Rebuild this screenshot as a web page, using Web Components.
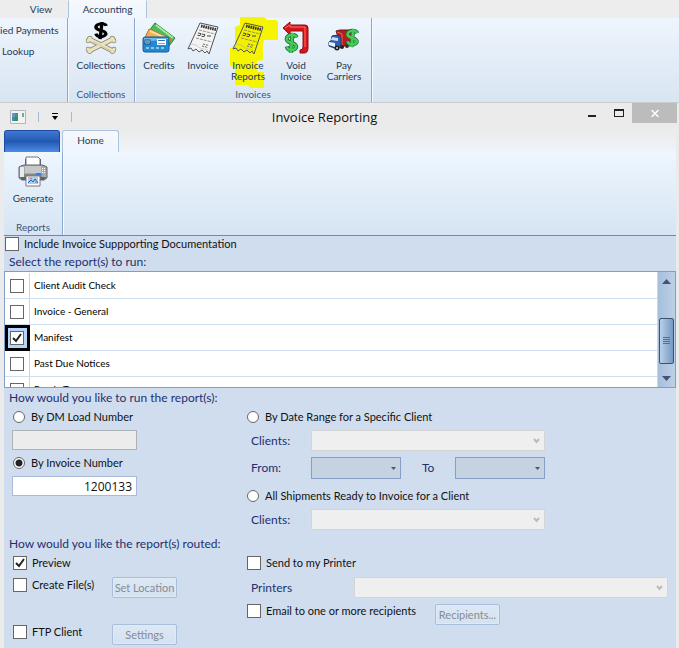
<!DOCTYPE html>
<html lang="en">
<head>
<meta charset="utf-8">
<title>Invoice Reporting</title>
<style>
  html, body { height: 100%; }
  body { margin: 0; background: #ebebeb; color: #111; font: 11px/16px Lato, "Open Sans", sans-serif; overflow: hidden; }
</style>
</head>
<body>
<invoice-app></invoice-app>

<script>
const define = (name, html, setup) => {
  const template = document.createElement('template');
  template.innerHTML = html;
  customElements.define(name, class extends HTMLElement {
    constructor() {
      super();
      this.attachShadow({ mode: 'open' }).append(template.content.cloneNode(true));
    }
    connectedCallback() { if (setup) setup(this, this.shadowRoot); }
  });
};

const receipt = `
  <path d="M13 1 31 5 22 32 20 29 18 31 15 28 12 30 9 27 6 29 4 26 1 27Z" fill="var(--paper,#f4f4f4)" stroke="#555"/>
  <path d="m1 25 2-3 6 1 4 3 8 2" fill="none" stroke="#aaa" opacity=".5"/>
  <path d="m14 4 15 3.500" stroke="#333" stroke-width="3" stroke-dasharray="1.600 .7"/>
  <path d="m12 8 16 4M9 16l16 4" stroke="#777" stroke-width=".8" stroke-dasharray="3 1"/>
  <path d="m11 11 3 .7-1 2-2.500-.5M15 12l3 .7-1 2-2.500-.5M20 14h4" stroke="#444" fill="none"/>
  <path d="m16 22 6 1.500M15 24l6 1.500" stroke="#666" stroke-dasharray="2 1"/>`;

const dollar = `
  <path d="M14 5Q13 2 8.500 2 3 3 3 7 4 10 9 11 14 13 13.500 16 12 19 8 19 4 19 3 15" fill="none"/>
  <path d="M9.500 0 7.500 22" fill="none"/>`;

const icons = {
  collections: `<svg width="32" height="32" viewBox="0 0 32 32">
    <g stroke="#8b8366" stroke-linecap="round" fill="none">
      <path d="M4 17 28 29M28 17 4 29" stroke-width="5"/>
      <path d="M3 19h.1M5 16h.1M29 19h.1M27 16h.1M3 27h.1M5 29.500h.1M29 27h.1M27 29.500h.1" stroke-width="4.500"/>
      <path d="M4 17 28 29M28 17 4 29" stroke="#e9e3c4" stroke-width="3.500"/>
      <path d="M3 19h.1M5 16h.1M29 19h.1M27 16h.1M3 27h.1M5 29.500h.1M29 27h.1M27 29.500h.1" stroke="#e9e3c4" stroke-width="3.200"/>
      <path d="m9 20 17 9" stroke="#cfc69d"/>
    </g>
    <g transform="translate(8 0) scale(.95 .78)" stroke="#000" stroke-width="3.500">${dollar}</g></svg>`,
  credits: `<svg width="34" height="32" viewBox="0 0 34 32">
    <path d="m13 1 20 15-9 12L4 13Z" fill="#4fb95c" stroke="#218439"/>
    <path d="m14 3 17 13" stroke="#a8e8a0" stroke-width="2"/>
    <path d="m7 7 22 10-5 12L2 18Z" fill="#f6ad4b" stroke="#ce7424"/>
    <path d="m8 9 18 8" stroke="#fbdc9a" stroke-width="2"/>
    <rect x="1" y="15" width="26" height="15" rx="2" fill="#2388cf" stroke="#145d9f"/>
    <path d="M2 20 26 17v-1H2Z" fill="#68baf0"/>
    <rect x="3" y="18" width="5" height="4" fill="#d7edf8" stroke="#174f80"/><path d="m4 19 3 2M7 19l-3 2" stroke="#174f80" stroke-width=".7"/>
    <path d="M15 17h9v6h-9z" fill="#fff"/><path d="M16 18.500h7" stroke="#3b70b0"/><path d="M16 21.500h7" stroke="#e48b35"/>
    <path d="M4 26h20" stroke="#a9ddf6" stroke-width="1.500" stroke-dasharray="3 2"/></svg>`,
  invoice: `<svg width="32" height="33" viewBox="0 0 32 33">${receipt}</svg>`,
  voided: `<svg width="28" height="34" viewBox="0 0 28 34">
    <path d="M1 7 8 1v3h15q3 0 3 3v20q0 5-4 5h-4v-3q3 0 3-3V10H8v4Z" fill="#d9141b" stroke="#8e0c12"/>
    <path d="M3 7 8 4v2h15v20" fill="none" stroke="#f9736c"/>
    <g transform="translate(2 12) scale(.9)"><g stroke="#14702d" stroke-width="4.500">${dollar}</g><g stroke="#49c95b" stroke-width="2.800">${dollar}</g></g></svg>`,
  carriers: `<svg width="34" height="32" viewBox="0 0 34 32">
    <path d="M9 9 13 8h12v13l-10 4Z" fill="#b51e20" stroke="#681719"/><path d="m10 10 5 2v13" stroke="#eb6a56" fill="none"/>
    <path d="m5 14 6-1 3 3v9l-4 2-8-3v-4l2-1Z" fill="#315eae" stroke="#1d3568"/>
    <path d="m5 15 6 1v3l-7-1Z" fill="#bfe3fa"/><path d="m2 20 6 1v4l-6-2Z" fill="#e7f0fb"/>
    <circle cx="10" cy="26" r="2.500" fill="#222"/><circle cx="10" cy="26" r="1" fill="#ccc"/>
    <circle cx="15" cy="25" r="2" fill="#222"/><circle cx="20" cy="24" r="2" fill="#333"/>
    <g transform="translate(18 7) scale(.87 .82)"><g stroke="#14702d" stroke-width="4.500">${dollar}</g><g stroke="#49c95b" stroke-width="3">${dollar}</g></g></svg>`,
  printer: `<svg width="30" height="31" viewBox="0 0 30 31">
    <path d="M7 3h16v9H7z" fill="#555"/><path d="M8 1h12l2 2v7H8z" fill="#fff" stroke="#777"/>
    <path d="m3 10 3-1h18l3 1 2 1v11l-3 2H4l-3-2V11Z" fill="#a8aaad" stroke="#606468"/>
    <path d="M7 10h16v7H7z" fill="#c5c7c9"/><path d="M2 11h4v10H2z" fill="#e9eaec"/>
    <path d="M26.500 12v6M24.500 12v6" stroke="#f5f5f5" stroke-dasharray="1 1"/>
    <path d="M6 18h18v3H6z" fill="#85878a"/><path d="M18 18h5" stroke="#2f80e1" stroke-width="2"/>
    <path d="M2 21h26l-2 3H4Z" fill="#5e6163"/>
    <path d="M8 20h14v10H8z" fill="#fff" stroke="#777"/><path d="M10 21h10v7H10z" fill="#9fd1f5"/>
    <path d="m10 27 3-3 2 2 2-3 3 4" fill="none" stroke="#235fc4"/><path d="M12 22.500h2M17 26h2" stroke="#ea6657"/></svg>`
};

define('ribbon-tab', `<style>
  :host { display: block; }
  button { box-sizing: border-box; width: 100%; height: 100%; padding: 0 0 3px; border: 1px solid transparent; border-bottom: 0; background: none; color: #1e395b; font: inherit; font-size: 10px; }
  :host([active]) button { background: linear-gradient(#f6f8fb, #eff6fe); border-color: #aac4df; border-radius: 3px 3px 0 0; }
  :host([square]) button { padding-bottom: 5px; border-top-color: #f6f8fb; border-radius: 0; }
  :host([file]) button { background: linear-gradient(#3f78d0, #2459b3 50%, #4b8ce4); border-color: #1c4ba4; border-radius: 3px 3px 0 0; }
</style><button type="button"><slot></slot></button>`,
(host, root) => { const n = host.getAttribute('label'); if (n) root.querySelector('button').setAttribute('aria-label', n); });

define('ribbon-button', `<style>
  :host { display: block; }
  button { display: flex; flex-direction: column; align-items: center; width: 100%; padding: 0; border: 0; background: none; color: #1e395b; font: inherit; font-size: 10px; line-height: 11px; text-align: center; }
  .icon { display: flex; height: 38px; margin-bottom: 3px; align-items: center; }
  svg { display: block; fill-rule: evenodd; }
  .over { position: relative; display: flex; flex-direction: column; align-items: center; width: 100%; }
  .mark { display: none; position: absolute; left: 7px; top: -2px; }
  :host([marked]) .mark { display: block; }
  :host([marked]) { --paper: #f0f000; }
  .icon, .text { position: relative; }
</style><button type="button"><span class="over">
  <svg class="mark" width="48" height="72" viewBox="0 0 48 72" aria-hidden="true"><path d="M10 0H34L37 3H46L48 5V23H34L33 28V43L27 44V55H34V71H20L18 68H5V50L0 49V31L5 30V10L10 8Z" fill="#f5f500"/></svg>
  <span class="icon"></span><span class="text"><slot></slot></span></span></button>`,
(host, root) => { root.querySelector('.icon').innerHTML = icons[host.getAttribute('icon')]; });

define('ribbon-group', `<style>
  :host { display: flex; flex-direction: column; justify-content: space-between; box-sizing: border-box; border-right: 1px solid #8ca9d0; box-shadow: 1px 0 #f5f9fe; color: #1e395b; font-size: 10px; }
  .items { display: flex; }
  .caption { line-height: 15px; text-align: center; color: #3e5578; }
</style><div class="items"><slot></slot></div><div class="caption"></div>`,
(host, root) => { root.querySelector('.caption').textContent = host.getAttribute('caption') || ''; });

define('main-ribbon', `<style>
  :host { display: block; background: #ededed; }
  .tabs { display: flex; height: 18px; }
  .tabs ribbon-tab:first-child { width: 54px; padding-left: 14px; }
  .tabs ribbon-tab:last-child { width: 79px; }
  .bar { display: flex; height: 84px; background: linear-gradient(#eef5fd, #d8e5f2); }
  ribbon-group { padding-top: 1px; }
  .cut { width: 68px; padding-top: 0; }
  .links { display: flex; flex-direction: column; padding-top: 4px; gap: 5px; }
  .links button { padding: 0; border: 0; background: none; text-align: left; color: #1e395b; font: inherit; line-height: 16px; }
  .links button:last-child { padding-left: 2px; }
  .collections ribbon-button { width: 66px; }
  .invoices { width: 237px; }
  .invoices ribbon-button { width: 50px; }
  .invoices ribbon-button:nth-child(1) { width: 48px; }
  .invoices ribbon-button:nth-child(2) { width: 40px; }
  .invoices ribbon-button:nth-child(4) { width: 46px; }
</style>
<div class="tabs"><ribbon-tab>View</ribbon-tab><ribbon-tab active square>Accounting</ribbon-tab></div>
<div class="bar">
  <ribbon-group class="cut"><div class="links"><button type="button">ied Payments</button><button type="button">Lookup</button></div></ribbon-group>
  <ribbon-group class="collections" caption="Collections"><ribbon-button icon="collections">Collections</ribbon-button></ribbon-group>
  <ribbon-group class="invoices" caption="Invoices">
    <ribbon-button icon="credits">Credits</ribbon-button><ribbon-button icon="invoice">Invoice</ribbon-button>
    <ribbon-button icon="invoice" marked>Invoice<br>Reports</ribbon-button><ribbon-button icon="voided">Void<br>Invoice</ribbon-button>
    <ribbon-button icon="carriers">Pay<br>Carriers</ribbon-button>
  </ribbon-group>
</div>`);

define('title-bar', `<style>
  :host { display: grid; grid-template-columns: 1fr auto 1fr; height: 27px; align-items: center; }
  .quick { display: flex; align-items: center; gap: 12px; padding-left: 6px; }
  .quick i { width: 1px; height: 10px; background: #a8bad3; }
  h1 { margin: 0; padding-right: 32px; font: 13px/20px "Open Sans", sans-serif; color: #111; }
  .controls { display: flex; justify-content: flex-end; align-self: start; }
  button { display: flex; align-items: center; justify-content: center; width: 27px; height: 20px; padding: 0; border: 0; background: none; }
  .quick button { width: 8px; }
  .controls .close { width: 45px; background: #bcbcbc; }
</style>
<div class="quick">
  <svg width="16" height="14" viewBox="0 0 16 14"><path d="M.5.5h15v13H.5z" fill="#f1f3f3" stroke="#b1b7bc"/><path d="M2 3h6v8H2z" fill="#438f96"/><path d="M2 3h3v4H2z" fill="#6798bd"/><path d="M5 7h3v4H5z" fill="#349064"/><path d="M12 3h2v4h-2z" fill="#73a998"/></svg>
  <i></i><button type="button" aria-label="Customize toolbar"><svg width="6" height="7" viewBox="0 0 6 7"><path d="M0 0h6v1H0zM0 3h6L3 7Z"/></svg></button><i></i>
</div>
<h1>Invoice Reporting</h1>
<div class="controls">
  <button type="button" aria-label="Minimize"><svg width="8" height="8"><path d="M0 6h8v2H0z" fill="#222"/></svg></button>
  <button type="button" aria-label="Maximize"><svg width="10" height="8"><path d="M0 0h10v8H0zM1 2v5h8V2z" fill="#222" fill-rule="evenodd"/></svg></button>
  <button type="button" class="close" aria-label="Close"><svg width="8" height="7"><path d="m.5 0 7 7M7.500 0l-7 7" stroke="#fff" stroke-width="1.500"/></svg></button>
</div>`);

define('window-ribbon', `<style>
  :host { display: block; }
  .tabs { display: flex; height: 22px; gap: 2px; background: linear-gradient(#ebebeb, #f0f4f8); }
  .tabs ribbon-tab { width: 57px; }
  .tabs ribbon-tab:first-child { width: 56px; }
  .bar { display: flex; height: 84px; box-sizing: border-box; border-bottom: 1px solid #6f89ae; background: linear-gradient(#eef6fe, #d6e4f3); }
  ribbon-group { width: 59px; }
  ribbon-button { width: 58px; }
</style>
<div class="tabs"><ribbon-tab file label="File"></ribbon-tab><ribbon-tab active>Home</ribbon-tab></div>
<div class="bar"><ribbon-group caption="Reports"><ribbon-button icon="printer">Generate</ribbon-button></ribbon-group></div>`);

const choiceStyle = `
  input { appearance: none; flex: none; box-sizing: border-box; width: 14px; height: 14px; margin: 0; border: 1px solid #666; background: #fff; }
  input[type=checkbox]:checked { background: #fff url("data:image/svg+xml,%3Csvg xmlns='http://www.w3.org/2000/svg' viewBox='0 0 12 12'%3E%3Cpath d='M2 6l3 3 5-7' fill='none' stroke='%23222' stroke-width='2'/%3E%3C/svg%3E"); }
  input[type=radio] { width: 12px; height: 12px; border-radius: 50%; }
  input[type=radio]:checked { background: radial-gradient(circle, #222 3px, #fff 4px); }`;

define('choice-field', `<style>
  :host { display: flex; align-items: center; height: 20px; }
  label { display: flex; align-items: center; gap: 5px; white-space: nowrap; line-height: 16px; }
  :host([type=radio]) label { gap: 6px; }
  ${choiceStyle}
</style><label><input type="checkbox"><span><slot></slot></span></label>`,
(host, root) => {
  const input = root.querySelector('input');
  input.type = host.getAttribute('type') || 'checkbox';
  input.checked = host.hasAttribute('checked');
});

define('report-list', `<style>
  :host { display: flex; height: 117px; box-sizing: border-box; border: 1px solid #7e9fc6; background: #fff; }
  .view { flex: 1; overflow: hidden; padding-top: 1px; }
  table { width: 100%; border-collapse: separate; border-spacing: 0; font-size: 10px; color: #000; }
  td { height: 26px; box-sizing: border-box; padding: 0 4px; border-bottom: 1px solid #cfdeee; line-height: 15px; }
  td:first-child { width: 25px; padding: 0 4px 0 5px; border-right: 1px solid #d0d4d8; }
  td.current { padding: 0 2px; border: 3px solid #000; background: #b4d6fb; }
  td.current input { margin-left: 0; }
  input { display: block; }
  .scroll { display: flex; flex-direction: column; align-items: center; justify-content: space-between; width: 18px; box-sizing: border-box; border-left: 1px solid #c9d9ea; background: linear-gradient(90deg, #a5bfdb, #bdd0e7); }
  .scroll button { display: flex; width: 100%; height: 18px; padding: 0; border: 0; background: none; align-items: center; justify-content: center; }
  .space { flex: 27; } .rest { flex: 5; }
  .thumb { display: flex; align-items: center; justify-content: center; width: 15px; height: 46px; box-sizing: border-box; border: 1px solid #405070; border-radius: 2px; background: linear-gradient(90deg, #b9d1e9, #7598c3); }
  ${choiceStyle}
</style>
<div class="view"><table><tbody></tbody></table></div>
<div class="scroll"><button type="button" aria-label="Scroll up"><svg width="9" height="5"><path d="m0 5 4.500-5L9 5Z" fill="#45517b"/></svg></button>
<span class="space"></span><span class="thumb"><svg width="7" height="7"><path d="M0 .5h7M0 2.500h7M0 4.500h7M0 6.500h7" stroke="#566b9b"/></svg></span><span class="rest"></span>
<button type="button" aria-label="Scroll down"><svg width="9" height="5"><path d="M0 0h9L4.500 5Z" fill="#45517b"/></svg></button></div>`,
(host, root) => {
  const body = root.querySelector('tbody');
  host.getAttribute('items').split('|').forEach((name, i) => {
    const on = name === host.getAttribute('selected');
    const row = body.insertRow();
    row.innerHTML = `<td${on ? ' class="current"' : ''}><input type="checkbox" id="r${i}"${on ? ' checked' : ''}></td><td><label for="r${i}">${name}</label></td>`;
  });
});

define('drop-field', `<style>
  :host { display: flex; align-items: center; color: #1f2f6e; font-size: 12px; }
  label { width: 60px; line-height: 16px; }
  .box { display: grid; flex: 1; align-items: center; }
  select, svg { grid-area: 1 / 1; }
  select { appearance: none; width: 100%; height: 21px; box-sizing: border-box; border: 1px solid #d5d5d5; border-radius: 0; background: #efefef; opacity: 1; }
  svg { justify-self: end; margin-right: 5px; pointer-events: none; }
  .down { display: none; }
  :host([date]) select { height: 22px; border-color: #869fc4; background: #c5d2e2; }
  :host([date]) .down { display: block; } :host([date]) .vee { display: none; }
  :host([wide]) label { width: 103px; }
  :host([short]) label { width: 33px; }
</style><label for="s"></label><div class="box"><select id="s" disabled></select>
<svg class="vee" width="7" height="6"><path d="m1 1 2.500 3L6 1" fill="none" stroke="#bbb" stroke-width="2"/></svg>
<svg class="down" width="5" height="3"><path d="M0 0h5L2.500 3Z" fill="#555"/></svg></div>`,
(host, root) => { root.querySelector('label').textContent = host.getAttribute('label'); });

define('text-field', `<style>
  :host { display: block; width: 125px; }
  input { display: block; width: 100%; height: 20px; box-sizing: border-box; padding: 0 4px; border: 1px solid #a9bbd9; border-radius: 0; background: #fff; color: #111; font: 12px/16px "Open Sans", sans-serif; text-align: right; }
  input:disabled { border-color: #adb2b5; background: #ececec; }
</style><input type="text">`,
(host, root) => {
  const input = root.querySelector('input');
  input.value = host.getAttribute('value') || '';
  input.disabled = host.hasAttribute('disabled');
  input.setAttribute('aria-label', host.getAttribute('label'));
});

define('push-button', `<style>
  :host { display: block; width: 65px; }
  button { width: 100%; height: 21px; box-sizing: border-box; padding: 0; border: 1px solid #a9bedb; border-radius: 2px; background: linear-gradient(#dde8f5, #d4e1f1); box-shadow: inset 0 0 0 1px #e0eaf5; color: #858c94; font: inherit; white-space: nowrap; }
</style><button type="button" disabled><slot></slot></button>`);

define('report-form', `<style>
  :host { display: block; }
  .include { height: 15px; padding-left: 1px; }
  h2 { margin: 0; padding: 5px 0 0 5px; font: inherit; font-size: 12px; line-height: 18px; color: #1f2f6e; }
  h2.first { padding-top: 2px; }
  h2.run { padding-top: 1px; }
  .columns { display: grid; grid-template-columns: 234px 1fr; padding: 0 8px; }
  choice-field { padding-left: 1px; }
  .stack { display: flex; flex-direction: column; gap: 3px; }
  .stack > drop-field { max-width: 294px; margin-left: 5px; }
  .dates { display: flex; gap: 21px; margin: 3px 0 4px 5px; }
  .dates drop-field:first-child { width: 150px; }
  .dates drop-field:last-child { width: 123px; }
  .route { padding-bottom: 2px; gap: 4px; }
  .option { display: grid; grid-template-columns: 100px auto; align-items: start; }
  .option choice-field { height: 16px; }
  .gap { padding-top: 22px; }
  .email { grid-template-columns: 189px auto; padding-top: 1px; }
  .email push-button { padding-top: 1px; }
  .route > drop-field { max-width: none; }
</style>
<choice-field class="include">Include Invoice Suppporting Documentation</choice-field>
<h2 class="first">Select the report(s) to run:</h2>
<report-list selected="Manifest" items="Client Audit Check|Invoice - General|Manifest|Past Due Notices|Ready To"></report-list>
<h2 class="run">How would you like to run the report(s):</h2>
<div class="columns">
  <div class="stack"><choice-field type="radio">By DM Load Number</choice-field><text-field disabled label="DM Load Number"></text-field>
    <choice-field type="radio" checked>By Invoice Number</choice-field><text-field value="1200133" label="Invoice Number"></text-field></div>
  <div class="stack"><choice-field type="radio">By Date Range for a Specific Client</choice-field><drop-field label="Clients:"></drop-field>
    <div class="dates"><drop-field date label="From:"></drop-field><drop-field date short label="To"></drop-field></div>
    <choice-field type="radio">All Shipments Ready to Invoice for a Client</choice-field><drop-field label="Clients:"></drop-field></div>
</div>
<h2>How would you like the report(s) routed:</h2>
<div class="columns">
  <div class="stack route"><choice-field checked>Preview</choice-field>
    <div class="option"><choice-field>Create File(s)</choice-field><push-button>Set Location</push-button></div>
    <div class="option gap"><choice-field>FTP Client</choice-field><push-button>Settings</push-button></div></div>
  <div class="stack route"><choice-field>Send to my Printer</choice-field><drop-field wide label="Printers"></drop-field>
    <div class="option email"><choice-field>Email to one or more recipients</choice-field><push-button>Recipients...</push-button></div></div>
</div>`);

define('report-window', `<style>
  :host { display: flex; flex-direction: column; flex: 1; padding: 0 3px 0 4px; border-top: 1px solid #c8ccd0; background: #ebebeb; }
  title-bar { margin-right: -1px; }
  report-form { flex: 1; background: #d0ddee; }
</style><title-bar></title-bar><window-ribbon></window-ribbon><report-form></report-form>`);

define('invoice-app', `<style>
  :host { display: flex; flex-direction: column; min-height: 100vh; }
</style><main-ribbon></main-ribbon><report-window></report-window>`);
</script>
</body>
</html>
